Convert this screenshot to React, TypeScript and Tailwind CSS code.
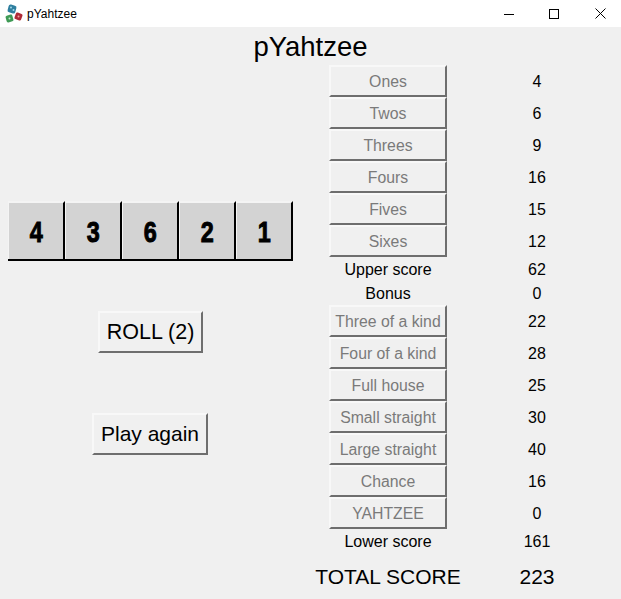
const dice = [4, 3, 6, 2, 1];

const upper = [
  ['Ones', 4],
  ['Twos', 6],
  ['Threes', 9],
  ['Fours', 16],
  ['Fives', 15],
  ['Sixes', 12]
] as const;

const lower = [
  ['Three of a kind', 22],
  ['Four of a kind', 28],
  ['Full house', 25],
  ['Small straight', 30],
  ['Large straight', 40],
  ['Chance', 16],
  ['YAHTZEE', 0]
] as const;

function AppIcon() {
  return (
    <svg width="18" height="20" viewBox="0 0 18 20">
      <rect x="3" y="1" width="8" height="8" rx="2" fill="#2f7f9f" transform="rotate(15 7 5)" />
      <circle cx="6" cy="3.5" r="1" fill="#a5d8ea" />
      <circle cx="8.5" cy="6" r="1" fill="#a5d8ea" />
      <rect x="1" y="11" width="7" height="7" rx="1.5" fill="#3f9a55" transform="rotate(-15 4.5 14.5)" />
      <circle cx="4.5" cy="14.5" r="1" fill="#c8ecd0" />
      <rect x="10" y="9" width="7" height="7" rx="1.5" fill="#b02a37" transform="rotate(20 13.5 12.5)" />
      <circle cx="13.5" cy="12.5" r="1" fill="#f0a0a0" />
    </svg>
  );
}

function TitleBar() {
  return (
    <div className="flex h-[27px] items-center bg-white pl-[5px]">
      <AppIcon />
      <span className="ml-[4px] text-[12px] text-black">pYahtzee</span>
      <div className="ml-auto flex items-center pr-[15px] text-black">
        <svg width="10" height="10" viewBox="0 0 10 10" className="mr-[35px]">
          <path d="M0 5.5H10" stroke="currentColor" fill="none" />
        </svg>
        <svg width="10" height="10" viewBox="0 0 10 10" className="mr-[36px]">
          <rect x="0.5" y="0.5" width="9" height="9" stroke="currentColor" fill="none" />
        </svg>
        <svg width="11" height="11" viewBox="0 0 11 11">
          <path d="M0.5 0.5L10.5 10.5M10.5 0.5L0.5 10.5" stroke="currentColor" fill="none" />
        </svg>
      </div>
    </div>
  );
}

function Category({ label }: { label: string }) {
  return (
    <div className="flex h-[32px] w-[118px] shrink-0 items-center justify-center border-2 border-t-[#f8f8f8] border-r-[#6e6e6e] border-b-[#6e6e6e] border-l-[#f8f8f8] pt-[2px] text-[15.8px] text-[#7a7a7a]">
      {label}
    </div>
  );
}

function ScoreRow({ label, score }: { label: string; score: number }) {
  return (
    <div className="flex h-[32px] items-center">
      <Category label={label} />
      <span className="mt-[2px] w-[180px] shrink-0 text-center text-[16px] text-black">{score}</span>
    </div>
  );
}

function SumRow({ label, score }: { label: string; score: number }) {
  return (
    <div className="flex h-[24px] items-center pt-[2px] text-[16px] text-black">
      <span className="w-[118px] shrink-0 text-center">{label}</span>
      <span className="w-[180px] shrink-0 text-center">{score}</span>
    </div>
  );
}

function ActionButton({ label, className }: { label: string; className: string }) {
  return (
    <div
      className={`flex h-[42px] items-center justify-center border-2 border-t-[#f8f8f8] border-r-[#6e6e6e] border-b-[#6e6e6e] border-l-[#f8f8f8] text-black ${className}`}
    >
      {label}
    </div>
  );
}

export default function App() {
  return (
    <div className="h-[599px] w-[621px] overflow-hidden bg-[#f0f0f0] font-['Liberation_Sans',Arial,sans-serif]">
      <TitleBar />
      <h1 className="flex h-[38px] items-center justify-center pt-[2px] text-[27.5px] text-black">pYahtzee</h1>
      <div className="flex">
        <div className="w-[329px] shrink-0 pt-[136px]">
          <div className="ml-[8px] flex w-[285px] border-b-2 border-black">
            {dice.map((value) => (
              <div
                key={value}
                className="flex h-[58px] w-[57px] items-center justify-center border-t-2 border-r-2 border-l border-t-[#f4f4f4] border-r-black border-l-[#f4f4f4] bg-[#d3d3d3] text-[30px] font-bold text-black"
              >
                <span className="scale-x-[0.78] [-webkit-text-stroke:1px_#000]">{value}</span>
              </div>
            ))}
          </div>
          <div className="mt-[50px] flex flex-col items-center pr-[28px]">
            <ActionButton label="ROLL (2)" className="w-[105px] text-[21.5px]" />
            <ActionButton label="Play again" className="mt-[60px] mr-[1px] w-[116px] text-[21px]" />
          </div>
        </div>
        <div className="shrink-0">
          {upper.map(([label, score]) => (
            <ScoreRow key={label} label={label} score={score} />
          ))}
          <SumRow label="Upper score" score={62} />
          <SumRow label="Bonus" score={0} />
          {lower.map(([label, score]) => (
            <ScoreRow key={label} label={label} score={score} />
          ))}
          <SumRow label="Lower score" score={161} />
          <div className="-ml-[14px] mt-[8px] flex items-center text-[21px] text-black">
            <span className="w-[146px] shrink-0 text-center">TOTAL SCORE</span>
            <span className="w-[152px] shrink-0 text-center">223</span>
          </div>
        </div>
      </div>
    </div>
  );
}
